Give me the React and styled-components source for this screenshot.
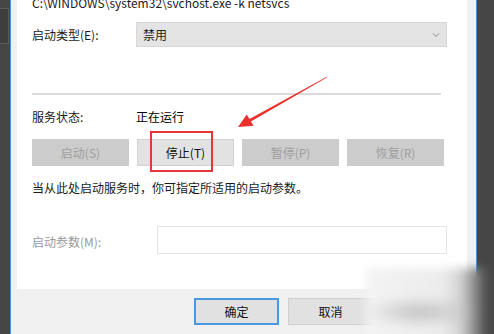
import React from "react";
import styled, { createGlobalStyle } from "styled-components";

const Global = createGlobalStyle`
  html, body { margin: 0; padding: 0; background: #464646; }
  body { font-family: "Noto Sans CJK SC", "Noto Sans", sans-serif; font-size: 12px; color: #000; }
  #root { width: 494px; height: 334px; overflow: hidden; }
`;

const Page = styled.div`
  position: relative;
  display: flex;
  width: 494px;
  height: 334px;
  overflow: hidden;
  background: #464646;
`;

const SideStrip = styled.div`
  width: ${(p) => p.$w}px;
  flex: none;
  display: flex;
  flex-direction: column;
  padding-top: 8px;
  box-sizing: border-box;
`;

const BgWindow = styled.div`
  height: 34px;
  margin-right: 1px;
  border: 1px solid #5c5c5c;
  border-left: none;
  background: #3e3e3e;
`;

const BlueEdge = styled.div`
  width: 1px;
  flex: none;
  background: #4a92dc;
`;

const Dialog = styled.div`
  width: 465px;
  flex: none;
  display: flex;
  flex-direction: column;
  background: #f0f0f0;
  padding: 0 9px 0 6px;
  box-sizing: border-box;
`;

const Panel = styled.div`
  height: 289px;
  background: #fff;
  padding: 0 20px 0 15px;
  box-sizing: border-box;
  display: flex;
  flex-direction: column;
`;

const PathText = styled.div`
  margin-top: -5px;
  line-height: 16px;
  height: 16px;
  white-space: nowrap;
  color: #1a1a1a;
`;

const Row = styled.div`
  display: flex;
  align-items: center;
  margin-top: ${(p) => p.$mt}px;
`;

const Label = styled.div`
  width: ${(p) => p.$w || 104}px;
  flex: none;
  line-height: 16px;
  color: ${(p) => (p.$muted ? "#9a9a9a" : "#1a1a1a")};
  padding-top: ${(p) => p.$pt || 0}px;
`;

const Select = styled.div`
  width: 311px;
  height: 25px;
  box-sizing: border-box;
  background: #e4e4e4;
  border: 1px solid #d6d6d6;
  display: flex;
  align-items: center;
  justify-content: space-between;
  padding: 0 6px 0 6px;
  color: #222;
`;

const Separator = styled.div`
  margin-top: 46px;
  height: 2px;
  width: 409px;
  background: #dadada;
`;

const ButtonRow = styled.div`
  display: flex;
  gap: 8px;
  margin-top: 14px;
`;

const SvcButton = styled.div`
  width: 97px;
  height: 27px;
  box-sizing: border-box;
  display: flex;
  align-items: center;
  justify-content: center;
  background: ${(p) => (p.$disabled ? "#cccccc" : "#e2e2e2")};
  border: 1px solid ${(p) => (p.$disabled ? "#cccccc" : "#d2d2d2")};
  color: ${(p) => (p.$disabled ? "#9e9e9e" : "#111")};
`;

const Desc = styled.div`
  margin-top: 14px;
  line-height: 16px;
  color: #1a1a1a;
`;

const Input = styled.div`
  width: 290px;
  height: 28px;
  box-sizing: border-box;
  background: #fff;
  border: 1px solid #e2e2e2;
`;

const Footer = styled.div`
  display: flex;
  justify-content: flex-end;
  gap: 9px;
  padding-top: 9px;
`;

const DlgButton = styled.div`
  width: 85px;
  height: 27px;
  box-sizing: border-box;
  display: flex;
  align-items: center;
  justify-content: center;
  background: #e1e1e1;
  border: ${(p) => (p.$primary ? "2px solid #4b98e0" : "1px solid #cfcfcf")};
  color: #111;
`;

const Highlight = styled.div`
  position: absolute;
  left: 150px;
  top: 131px;
  width: 63px;
  height: 41px;
  box-sizing: border-box;
  border: 2px solid #e8353a;
`;

const ArrowSvg = styled.svg`
  position: absolute;
  left: 0;
  top: 0;
  width: 494px;
  height: 334px;
  pointer-events: none;
`;

const Smudge = styled.div`
  position: absolute;
  left: 366px;
  top: 268px;
  width: 140px;
  height: 80px;
  background:
    radial-gradient(ellipse 60px 16px at 55px 44px, rgba(190,190,190,0.9), rgba(190,190,190,0) 100%),
    linear-gradient(90deg, #f3f3f3 0%, #ececec 55%, #d2d2d2 68%, #8a8a8a 78%, #4a4a4a 86%, #444 100%);
  filter: blur(5px);
`;

const Chevron = () => (
  <svg width="8" height="6" viewBox="0 0 8 6">
    <path d="M1 1.5 L4 4.5 L7 1.5" fill="none" stroke="#888" strokeWidth="1" />
  </svg>
);

export default function App() {
  return (
    <Page>
      <Global />
      <SideStrip $w={10}>
        <BgWindow />
      </SideStrip>
      <BlueEdge />
      <Dialog>
        <Panel>
          <PathText>C:\WINDOWS\system32\svchost.exe -k netsvcs</PathText>
          <Row $mt={11}>
            <Label>启动类型(E):</Label>
            <Select>
              <span>禁用</span>
              <Chevron />
            </Select>
          </Row>
          <Separator />
          <Row $mt={13}>
            <Label>服务状态:</Label>
            <span>正在运行</span>
          </Row>
          <ButtonRow>
            <SvcButton $disabled>启动(S)</SvcButton>
            <SvcButton>停止(T)</SvcButton>
            <SvcButton $disabled>暂停(P)</SvcButton>
            <SvcButton $disabled>恢复(R)</SvcButton>
          </ButtonRow>
          <Desc>当从此处启动服务时，你可指定所适用的启动参数。</Desc>
          <Row $mt={30}>
            <Label $muted $w={125} $pt={4}>启动参数(M):</Label>
            <Input />
          </Row>
        </Panel>
        <Footer>
          <DlgButton $primary>确定</DlgButton>
          <DlgButton>取消</DlgButton>
          <DlgButton>应用(A)</DlgButton>
        </Footer>
      </Dialog>
      <BlueEdge />
      <Highlight />
      <ArrowSvg viewBox="0 0 494 334">
        <polygon
          points="327.3,77.3 250.9,121.6 253.6,125.8 238,127 246.8,114.6 249.5,118.9 326.8,76.7"
          fill="#ec2f2a"
        />
      </ArrowSvg>
      <Smudge />
    </Page>
  );
}
